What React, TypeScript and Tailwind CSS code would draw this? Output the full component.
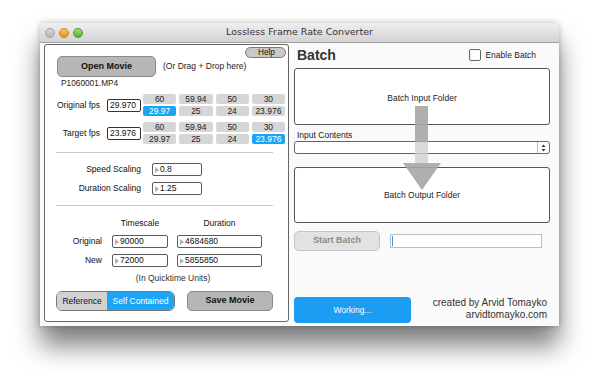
import React from "react";

const fpsTop = ["60", "59.94", "50", "30"];
const fpsBottom = ["29.97", "25", "24", "23.976"];

function FpsGrid({ selected }: { selected: string }) {
  return (
    <div className="grid grid-cols-4 gap-x-[3px] gap-y-[2px] w-[142px] ml-[2px]">
      {[...fpsTop, ...fpsBottom].map((v, i) => (
        <div
          key={i}
          className={`h-[10px] rounded-[2px] flex items-center justify-center text-[8.5px] leading-none ${
            i >= 4 && v === selected
              ? "bg-[#1ba3f4] text-white"
              : "bg-[#d6d6d6] text-[#222]"
          }`}
        >
          {v}
        </div>
      ))}
    </div>
  );
}

function Stepper() {
  return (
    <svg width="4" height="6" viewBox="0 0 4 6" className="shrink-0">
      <path d="M0 0 L4 3 L0 6 Z" fill="#b0b0b0" />
    </svg>
  );
}

function Field({ value, w }: { value: string; w: string }) {
  return (
    <div
      className={`${w} h-[13px] border border-[#5a5a5a] rounded-[2px] bg-white flex items-center pl-[2px] gap-[1px] text-[8.5px] text-[#111]`}
    >
      <Stepper />
      <span>{value}</span>
    </div>
  );
}

export default function App() {
  return (
    <div
      className="w-[600px] h-[382px] bg-white pt-[23px] pl-[40px] overflow-hidden"
      style={{ fontFamily: '"Liberation Sans", Arial, sans-serif' }}
    >
      <div className="w-[519px] rounded-t-[5px] bg-[#fafafa] shadow-[0_20px_26px_rgba(0,0,0,0.5),0_0_6px_rgba(0,0,0,0.25)]">
        {/* title bar */}
        <div className="h-[20px] rounded-t-[5px] bg-gradient-to-b from-[#efefef] to-[#d2d2d2] border-b border-[#a2a2a2] grid grid-cols-[60px_1fr_60px] items-center">
          <div className="flex items-center gap-[4px] pl-[5px]">
            <span className="w-[10px] h-[10px] rounded-full bg-gradient-to-b from-[#d8d8d8] to-[#b4b4b4] border border-[#a0a0a0]" />
            <span className="w-[10px] h-[10px] rounded-full bg-gradient-to-b from-[#fcc55a] to-[#e8920e] border border-[#c98219]" />
            <span className="w-[10px] h-[10px] rounded-full bg-gradient-to-b from-[#9ee07e] to-[#4fae2e] border border-[#4a9a2c]" />
          </div>
          <div
            className="text-center text-[9.5px] text-[#333]"
            style={{ fontFamily: '"DejaVu Sans", sans-serif' }}
          >
            Lossless Frame Rate Converter
          </div>
          <div />
        </div>

        {/* body */}
        <div className="flex pl-[4px] pt-[1px] pb-[3px]">
          {/* left panel */}
          <div className="w-[245px] h-[278px] border border-[#666] rounded-[3px] bg-white flex flex-col text-[8.5px] text-[#111]">
            <div className="flex justify-end mt-[2px] pr-[2px]">
              <div className="w-[41px] h-[11px] rounded-full bg-[#c9c9c9] border border-[#7a7a7a] flex items-center justify-end pr-[10px] text-[8.3px] leading-none">
                Help
              </div>
            </div>
            <div className="flex items-center -mt-[2px] ml-[12px]">
              <div className="w-[99px] h-[21px] rounded-[5px] bg-[#b6b6b6] border border-[#8a8a8a] flex items-center justify-center font-bold text-[9px]">
                Open Movie
              </div>
              <span className="ml-[7px] text-[#222]">(Or Drag + Drop here)</span>
            </div>
            <div className="ml-[16px] mt-[1px] h-[10px] leading-[10px] text-[8.3px] text-[#222]">
              P1060001.MP4
            </div>

            <div className="flex items-center mt-[6px]">
              <div className="w-[55px] text-right">Original fps</div>
              <div className="ml-[7px] w-[34px] h-[13px] border border-[#333] rounded-[2px] flex items-center pl-[2px]">
                29.970
              </div>
              <FpsGrid selected="29.97" />
            </div>
            <div className="flex items-center mt-[6px]">
              <div className="w-[55px] text-right">Target fps</div>
              <div className="ml-[7px] w-[34px] h-[13px] border border-[#333] rounded-[2px] flex items-center pl-[2px]">
                23.976
              </div>
              <FpsGrid selected="23.976" />
            </div>

            <div className="ml-[11px] mt-[8px] w-[217px] h-px bg-[#c2cad2]" />

            <div className="flex items-center mt-[10px]">
              <div className="w-[96px] text-right">Speed Scaling</div>
              <div className="ml-[11px]">
                <Field value="0.8" w="w-[50px]" />
              </div>
            </div>
            <div className="flex items-center mt-[6px]">
              <div className="w-[96px] text-right">Duration Scaling</div>
              <div className="ml-[11px]">
                <Field value="1.25" w="w-[50px]" />
              </div>
            </div>

            <div className="ml-[11px] mt-[10px] w-[217px] h-px bg-[#c2cad2]" />

            <div className="flex items-center mt-[12px] h-[10px]">
              <div className="w-[67px]" />
              <div className="w-[56px] text-center">Timescale</div>
              <div className="ml-[9px] w-[85px] text-center">Duration</div>
            </div>
            <div className="flex items-center mt-[7px]">
              <div className="w-[57px] text-right">Original</div>
              <div className="ml-[10px]">
                <Field value="90000" w="w-[56px]" />
              </div>
              <div className="ml-[9px]">
                <Field value="4684680" w="w-[85px]" />
              </div>
            </div>
            <div className="flex items-center mt-[6px]">
              <div className="w-[57px] text-right">New</div>
              <div className="ml-[10px]">
                <Field value="72000" w="w-[56px]" />
              </div>
              <div className="ml-[9px]">
                <Field value="5855850" w="w-[85px]" />
              </div>
            </div>
            <div className="ml-[38px] w-[180px] mt-[6px] h-[10px] leading-[10px] text-center text-[#333]">
              (In Quicktime Units)
            </div>

            <div className="flex items-center mt-[8px] ml-[11px]">
              <div className="w-[119px] h-[20px] rounded-[6px] border border-[#777] overflow-hidden flex">
                <div className="w-[50px] bg-[#d2d2d2] flex items-center justify-center">
                  Reference
                </div>
                <div className="flex-1 bg-[#1ca4f5] text-white flex items-center justify-center">
                  Self Contained
                </div>
              </div>
              <div className="ml-[12px] w-[86px] h-[20px] rounded-[5px] bg-[#b6b6b6] border border-[#8a8a8a] flex items-center justify-center font-bold text-[9px]">
                Save Movie
              </div>
            </div>
          </div>

          {/* right column */}
          <div className="relative ml-[5px] w-[256px] flex flex-col text-[8.5px] text-[#222]">
            <div className="h-[22px] flex items-center justify-between">
              <span className="pl-[3px] text-[14px] font-bold text-[#333]">Batch</span>
              <div className="flex items-center gap-[4px] pr-[14px]">
                <span className="w-[12px] h-[12px] border border-[#666] rounded-[2px] bg-white" />
                <span>Enable Batch</span>
              </div>
            </div>
            <div className="mt-[2px] h-[57px] border border-[#555] rounded-[3px] bg-white flex items-center justify-center pt-[3px]">
              Batch Input Folder
            </div>
            <div className="mt-[5px] h-[10px] leading-[10px] pl-[3px]">Input Contents</div>
            <div className="mt-[1px] h-[13px] border border-[#666] rounded-[3px] bg-white flex justify-end">
              <div className="w-[12px] border-l border-[#bbb] flex items-center justify-center">
                <svg width="5" height="8" viewBox="0 0 5 8">
                  <path d="M0.5 3 L2.5 0.5 L4.5 3 Z" fill="#333" />
                  <path d="M0.5 5 L2.5 7.5 L4.5 5 Z" fill="#333" />
                </svg>
              </div>
            </div>
            <div className="mt-[13px] h-[56px] border border-[#555] rounded-[3px] bg-white flex items-center justify-center pt-[1px]">
              Batch Output Folder
            </div>
            <div className="mt-[8px] flex items-center">
              <div className="w-[86px] h-[20px] rounded-[5px] bg-[#e2e2e2] border border-[#c4c4c4] flex items-center justify-center font-bold text-[9px] text-[#8a8a8a]">
                Start Batch
              </div>
              <div className="ml-[10px] w-[152px] h-[14px] border border-[#bdbdbd] bg-white flex items-center pl-[1px]">
                <span className="w-px h-[10px] bg-[#3b8ef0]" />
              </div>
            </div>
            <div className="mt-[46px] flex items-end justify-between">
              <div className="w-[117px] h-[26px] rounded-[4px] bg-[#1a9df2] text-white flex items-center justify-center">
                Working...
              </div>
              <div className="text-right text-[10px] leading-[12px] text-[#333] pr-[3px] pb-[2px]">
                <div>created by Arvid Tomayko</div>
                <div>arvidtomayko.com</div>
              </div>
            </div>

            {/* flow arrow drawn over the batch boxes */}
            <svg
              className="absolute left-[109px] top-[62px] pointer-events-none"
              width="38"
              height="84"
              viewBox="0 0 38 84"
            >
              <rect x="12" y="0" width="13" height="36" fill="#a6a6a6" fillOpacity="0.9" />
              <rect x="12" y="36" width="13" height="21" fill="#cfcfcf" fillOpacity="0.8" />
              <path d="M0 57 L38 57 L19 84 Z" fill="#a6a6a6" fillOpacity="0.9" />
            </svg>
          </div>
        </div>
      </div>
    </div>
  );
}
